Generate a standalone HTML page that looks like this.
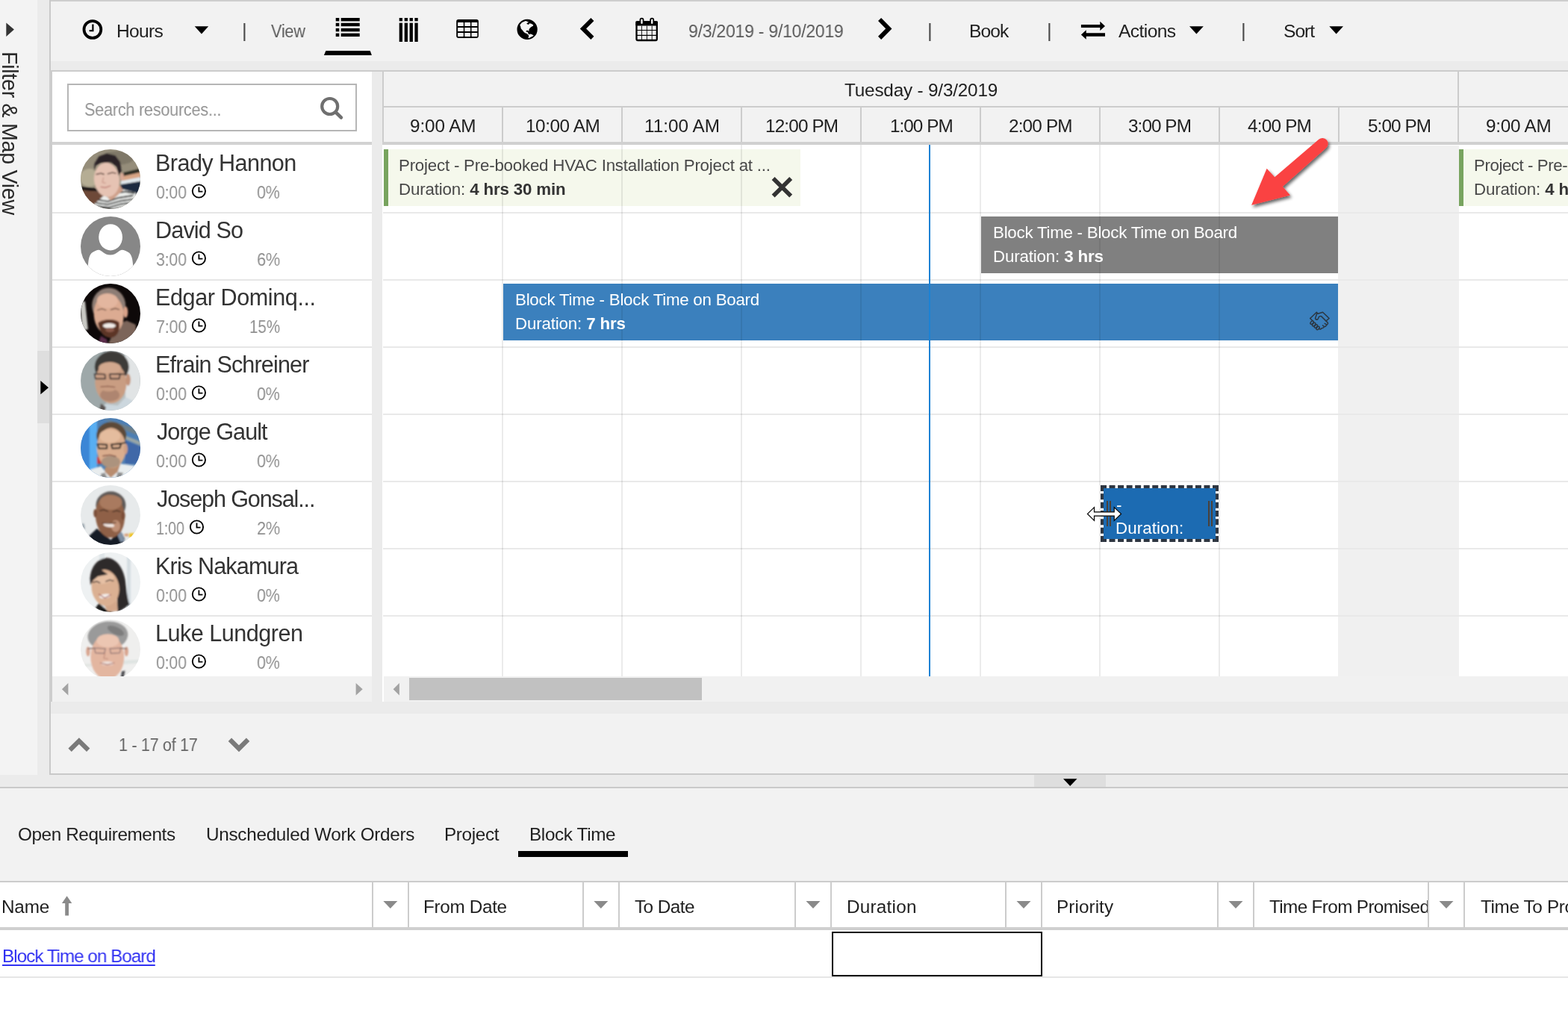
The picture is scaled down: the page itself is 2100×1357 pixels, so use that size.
<!DOCTYPE html>
<html lang="en"><head><meta charset="utf-8"><title>Schedule Board</title>
<style>
html,body{margin:0;padding:0;}
body{width:2100px;height:1357px;overflow:hidden;background:#fff;font-family:"Liberation Sans",Arial,sans-serif;}
#root{position:relative;width:2100px;height:1357px;overflow:hidden;background:#fff;}
#root div,#root svg,#root span.t{position:absolute;}
#root div{box-sizing:border-box;}
span.t{white-space:nowrap;will-change:transform;}
span.t b{font-weight:bold;}
</style></head><body><div id="root">
<!-- sidebar -->
<div style="left:0px;top:0px;width:50px;height:1038px;background:#f3f3f3;"></div>
<div style="left:50px;top:0px;width:16px;height:1038px;background:#ebebeb;"></div>
<div style="left:50px;top:470px;width:16px;height:97px;background:#dedede;"></div>
<!-- main panel -->
<div style="left:66px;top:0px;width:2034px;height:1038px;background:#f2f2f2;"></div>
<div style="left:66px;top:0px;width:2034px;height:2px;background:#cecece;"></div>
<div style="left:66px;top:0px;width:2px;height:1038px;background:#c9c9c9;"></div>
<div style="left:68px;top:82px;width:2032px;height:12px;background:#ebebeb;"></div>
<div style="left:66px;top:1036px;width:2034px;height:2px;background:#c9c9c9;"></div>
<div style="left:68px;top:940px;width:2032px;height:16px;background:#ebebeb;"></div>
<!-- board -->
<div style="left:66px;top:94px;width:2034px;height:2px;background:#cccccc;"></div>
<div style="left:66px;top:94px;width:4px;height:846px;background:#cdcdcd;"></div>
<div style="left:70px;top:96px;width:428px;height:810px;background:#ffffff;"></div>
<div style="left:90px;top:112px;width:388px;height:64px;background:#ffffff;border:2px solid #b6b6b6;"></div>
<div style="left:70px;top:190px;width:428px;height:4px;background:#d2d2d2;"></div>
<div style="left:70px;top:284px;width:428px;height:2px;background:#e6e6e6;"></div>
<div style="left:70px;top:374px;width:428px;height:2px;background:#e6e6e6;"></div>
<div style="left:70px;top:464px;width:428px;height:2px;background:#e6e6e6;"></div>
<div style="left:70px;top:554px;width:428px;height:2px;background:#e6e6e6;"></div>
<div style="left:70px;top:644px;width:428px;height:2px;background:#e6e6e6;"></div>
<div style="left:70px;top:734px;width:428px;height:2px;background:#e6e6e6;"></div>
<div style="left:70px;top:824px;width:428px;height:2px;background:#e6e6e6;"></div>
<div style="left:498px;top:96px;width:14px;height:844px;background:#ebebeb;"></div>
<div style="left:512px;top:96px;width:1588px;height:94px;background:#f2f2f2;"></div>
<div style="left:512px;top:96px;width:2px;height:94px;background:#cccccc;"></div>
<div style="left:512px;top:142px;width:1588px;height:2px;background:#cccccc;"></div>
<div style="left:672px;top:144px;width:2px;height:46px;background:#cccccc;"></div>
<div style="left:832px;top:144px;width:2px;height:46px;background:#cccccc;"></div>
<div style="left:992px;top:144px;width:2px;height:46px;background:#cccccc;"></div>
<div style="left:1152px;top:144px;width:2px;height:46px;background:#cccccc;"></div>
<div style="left:1312px;top:144px;width:2px;height:46px;background:#cccccc;"></div>
<div style="left:1472px;top:144px;width:2px;height:46px;background:#cccccc;"></div>
<div style="left:1632px;top:144px;width:2px;height:46px;background:#cccccc;"></div>
<div style="left:1792px;top:144px;width:2px;height:46px;background:#cccccc;"></div>
<div style="left:1952px;top:144px;width:2px;height:46px;background:#cccccc;"></div>
<div style="left:1952px;top:96px;width:2px;height:48px;background:#cccccc;"></div>
<div style="left:512px;top:190px;width:1588px;height:4px;background:#d0d0d0;"></div>
<div style="left:512px;top:194px;width:1588px;height:746px;background:#ffffff;"></div>
<div style="left:1792px;top:195px;width:162px;height:711px;background:#f0f0f0;"></div>
<div style="left:513px;top:284px;width:1587px;height:2px;background:#e9e9e9;"></div>
<div style="left:513px;top:374px;width:1587px;height:2px;background:#e9e9e9;"></div>
<div style="left:513px;top:464px;width:1587px;height:2px;background:#e9e9e9;"></div>
<div style="left:513px;top:554px;width:1587px;height:2px;background:#e9e9e9;"></div>
<div style="left:513px;top:644px;width:1587px;height:2px;background:#e9e9e9;"></div>
<div style="left:513px;top:734px;width:1587px;height:2px;background:#e9e9e9;"></div>
<div style="left:513px;top:824px;width:1587px;height:2px;background:#e9e9e9;"></div>
<div style="left:70px;top:906px;width:428px;height:34px;background:#f1f1f1;"></div>
<div style="left:514px;top:906px;width:1586px;height:34px;background:#f1f1f1;"></div>
<div style="left:548px;top:908px;width:392px;height:30px;background:#c1c1c1;"></div>
<!-- bookings -->
<div style="left:514px;top:200px;width:558px;height:76px;background:#f5f8ec;border-left:6px solid #78a45f;"></div>
<div style="left:1954px;top:200px;width:146px;height:76px;background:#f5f8ec;border-left:6px solid #78a45f;"></div>
<div style="left:1314px;top:290px;width:478px;height:76px;background:#808080;"></div>
<div style="left:674px;top:380px;width:1118px;height:76px;background:#3b80bd;"></div>
<div style="left:672px;top:194px;width:2px;height:712px;background:rgba(0,0,0,0.08);"></div>
<div style="left:832px;top:194px;width:2px;height:712px;background:rgba(0,0,0,0.08);"></div>
<div style="left:992px;top:194px;width:2px;height:712px;background:rgba(0,0,0,0.08);"></div>
<div style="left:1152px;top:194px;width:2px;height:712px;background:rgba(0,0,0,0.08);"></div>
<div style="left:1312px;top:194px;width:2px;height:712px;background:rgba(0,0,0,0.08);"></div>
<div style="left:1472px;top:194px;width:2px;height:712px;background:rgba(0,0,0,0.08);"></div>
<div style="left:1632px;top:194px;width:2px;height:712px;background:rgba(0,0,0,0.08);"></div>
<div style="left:1244px;top:194px;width:2px;height:712px;background:#1c82d4;"></div>
<div style="left:1474px;top:650px;width:158px;height:76px;background:#ffffff;"></div>
<div style="left:1474px;top:650px;width:158px;height:76px;background:#1c6bb2;border:4px dashed #2e3641;background-clip:padding-box;"></div>
<div style="left:1482px;top:671px;width:2px;height:34px;background:#4a413b;"></div>
<div style="left:1486px;top:671px;width:2px;height:34px;background:#4a413b;"></div>
<div style="left:1618px;top:671px;width:2px;height:34px;background:#4a413b;"></div>
<div style="left:1622px;top:671px;width:2px;height:34px;background:#4a413b;"></div>
<!-- bottom -->
<div style="left:0px;top:1038px;width:2100px;height:16px;background:#ebebeb;"></div>
<div style="left:1385px;top:1038px;width:96px;height:16px;background:#dedede;"></div>
<div style="left:0px;top:1054px;width:2100px;height:2px;background:#c9c9c9;"></div>
<div style="left:0px;top:1056px;width:2100px;height:124px;background:#f2f2f2;"></div>
<div style="left:694px;top:1140px;width:147px;height:8px;background:#000000;"></div>
<div style="left:0px;top:1180px;width:2100px;height:2px;background:#cccccc;"></div>
<div style="left:0px;top:1182px;width:2100px;height:60px;background:#ffffff;"></div>
<div style="left:498px;top:1182px;width:2px;height:60px;background:#cccccc;"></div>
<div style="left:546px;top:1182px;width:2px;height:60px;background:#cccccc;"></div>
<div style="left:780px;top:1182px;width:2px;height:60px;background:#cccccc;"></div>
<div style="left:828px;top:1182px;width:2px;height:60px;background:#cccccc;"></div>
<div style="left:1064px;top:1182px;width:2px;height:60px;background:#cccccc;"></div>
<div style="left:1112px;top:1182px;width:2px;height:60px;background:#cccccc;"></div>
<div style="left:1346px;top:1182px;width:2px;height:60px;background:#cccccc;"></div>
<div style="left:1394px;top:1182px;width:2px;height:60px;background:#cccccc;"></div>
<div style="left:1630px;top:1182px;width:2px;height:60px;background:#cccccc;"></div>
<div style="left:1678px;top:1182px;width:2px;height:60px;background:#cccccc;"></div>
<div style="left:1912px;top:1182px;width:2px;height:60px;background:#cccccc;"></div>
<div style="left:1960px;top:1182px;width:2px;height:60px;background:#cccccc;"></div>
<div style="left:0px;top:1242px;width:2100px;height:4px;background:#cfcfcf;"></div>
<div style="left:0px;top:1308px;width:2100px;height:2px;background:#e6e6e6;"></div>
<div style="left:1114px;top:1248px;width:282px;height:60px;background:transparent;border:2px solid #000;"></div>
<svg style="left:70px;top:194px" width="428" height="712" viewBox="70 194 428 712"><defs><filter id="avb" x="-10%" y="-10%" width="120%" height="120%"><feGaussianBlur stdDeviation="0.9"/></filter></defs><g transform="translate(108,200)"><clipPath id="avc0"><circle cx="40" cy="40" r="40"/></clipPath><g clip-path="url(#avc0)"><rect width="80" height="80" fill="#958d7a"/><g filter="url(#avb)"><ellipse cx="11.9" cy="38.1" rx="13" ry="12" fill="#b5ad94" /><ellipse cx="49.7" cy="11.6" rx="22" ry="9" fill="#7f7868" /><polygon points="-3.4,49.4 31.1,53.4 31.1,57.3 -3.4,54.7" fill="#1c1614" /><polygon points="-3.4,54.7 31.1,57.3 31.1,81.2 -3.4,81.2" fill="#6e4a38" /><polygon points="55.0,32.1 81.5,25.5 81.5,30.8 55.0,36.8" fill="#2a2a24" /><polygon points="55.0,36.4 81.5,30.5 81.5,37.4 55.0,42.7" fill="#d9a585" /><polygon points="53.7,42.4 81.5,37.1 81.5,42.7 53.7,47.4" fill="#e1e9ee" /><polygon points="53.7,47.1 81.5,42.4 81.5,62.6 53.7,62.6" fill="#1b2a40" /><polygon points="18.5,73.2 31.1,62.0 43.1,67.3 56.3,53.4 73.6,58.0 78.2,82.5 18.5,82.5" fill="#eef0ee" /><polyline points="24.5,67.9 36.4,69.9 49.7,65.3 69.6,62.0" fill="none" stroke="#161616" stroke-width="1.9" stroke-linecap="round" stroke-linejoin="round" /><polyline points="21.2,71.9 36.4,73.9 53.0,69.3 72.2,66.6" fill="none" stroke="#161616" stroke-width="1.9" stroke-linecap="round" stroke-linejoin="round" /><polyline points="19.8,75.9 37.7,77.9 55.0,73.2 73.6,71.3" fill="none" stroke="#161616" stroke-width="1.9" stroke-linecap="round" stroke-linejoin="round" /><polyline points="49.7,58.0 60.3,56.7 71.6,58.7" fill="none" stroke="#161616" stroke-width="1.9" stroke-linecap="round" stroke-linejoin="round" /><polyline points="27.1,79.2 43.1,80.5 59.6,77.2" fill="none" stroke="#161616" stroke-width="1.8" stroke-linecap="round" stroke-linejoin="round" /><polygon points="36.4,65.3 40.4,56.7 52.3,48.1 57.0,54.7 47.0,64.0 40.4,68.6" fill="#cfa08a" /><ellipse cx="55.3" cy="36.8" rx="2.6" ry="5.2" fill="#d8a894" /><ellipse cx="35.1" cy="40.8" rx="17" ry="23" fill="#e6c3b3" transform="rotate(-6 35.1 40.8)" /><polygon points="17.9,29.5 18.5,18.9 24.5,9.6 35.1,5.6 46.4,8.3 53.0,16.9 54.7,29.5 50.7,34.8 48.4,23.5 40.4,17.5 27.1,18.2 20.5,21.5" fill="#2b2427" /><polyline points="21.2,33.5 27.1,32.1 31.1,33.5" fill="none" stroke="#4a3028" stroke-width="1.4" stroke-linecap="round" stroke-linejoin="round" /><polyline points="36.4,32.8 42.4,31.1 47.0,32.1" fill="none" stroke="#4a3028" stroke-width="1.4" stroke-linecap="round" stroke-linejoin="round" /><polyline points="27.1,50.4 33.1,51.4 39.7,49.0" fill="none" stroke="#b8726a" stroke-width="1.3" stroke-linecap="round" stroke-linejoin="round" /><polyline points="30.5,38.1 29.1,44.1 33.1,45.4" fill="none" stroke="#c9978a" stroke-width="1.2" stroke-linecap="round" stroke-linejoin="round" /></g></g></g><g transform="translate(108,290)"><clipPath id="avc1"><circle cx="40" cy="40" r="40"/></clipPath><g clip-path="url(#avc1)"><rect width="80" height="80" fill="#878787"/><ellipse cx="40.1" cy="27.8" rx="15.9" ry="17.6" fill="#fff"/><path d="M9.9 66C10.5 56 12 50.5 16 48C19 46 22 44.7 24 44.7C28 44.7 31 51.4 39.7 51.4C48.5 51.4 51.5 44.7 55.5 44.7C58 44.7 61 46 64 48C68 50.5 69.6 56 70.2 66L82 90L-2 90Z" fill="#fff"/></g></g><g transform="translate(108,380)"><clipPath id="avc2"><circle cx="40" cy="40" r="40"/></clipPath><g clip-path="url(#avc2)"><rect width="80" height="80" fill="#0e0909"/><g filter="url(#avb)"><polygon points="-0.7,24.8 5.9,23.5 9.9,61.3 1.9,62.6" fill="#c9c9c4" /><polygon points="49.7,54.7 61.6,49.4 73.6,54.7 76.2,81.2 36.4,81.2" fill="#7b655a" /><polygon points="23.2,81.2 27.1,69.9 35.1,74.6 36.4,81.2" fill="#5c2d4c" /><ellipse cx="37.7" cy="29.5" rx="22.5" ry="24" fill="#8d7d74" /><ellipse cx="37.7" cy="41.4" rx="20" ry="27.5" fill="#dcab92" transform="rotate(-4 37.7 41.4)" /><ellipse cx="35.8" cy="22.9" rx="14" ry="10" fill="#e3b69f" /><ellipse cx="60.3" cy="38.1" rx="3" ry="7.5" fill="#d9a188" /><path d="M23.2 52.7C29.8 46.7 46.4 46.7 51.7 52.0C53.7 64.6 47.0 73.2 39.1 72.6C29.8 71.3 24.5 62.6 23.2 52.7Z" fill="#5c3527"/><ellipse cx="38.4" cy="56.3" rx="8.5" ry="3.3" fill="#f2ece8" /><ellipse cx="39.1" cy="62.0" rx="6" ry="3" fill="#8a5848" /><polyline points="22.5,35.5 28.5,33.5 33.8,35.5" fill="none" stroke="#5a4036" stroke-width="1.2" stroke-linecap="round" stroke-linejoin="round" /><polyline points="40.4,34.8 46.4,33.1 51.7,34.8" fill="none" stroke="#5a4036" stroke-width="1.2" stroke-linecap="round" stroke-linejoin="round" /></g></g></g><g transform="translate(108,470)"><clipPath id="avc3"><circle cx="40" cy="40" r="40"/></clipPath><g clip-path="url(#avc3)"><rect width="80" height="80" fill="#b9c0c1"/><g filter="url(#avb)"><rect x="0" y="0" width="34" height="80" fill="#9ea8a9"/><rect x="60" y="0" width="20" height="80" fill="#e1e4e5"/><polygon points="27.1,81.2 32.4,71.3 49.7,73.2 60.3,62.0 72.2,67.9 76.2,81.2" fill="#ccd7de" /><polygon points="24.5,81.2 27.1,70.6 33.8,75.2 32.4,81.2" fill="#5c5452" /><ellipse cx="41.7" cy="21.5" rx="23" ry="21" fill="#3c3a38" /><ellipse cx="40.4" cy="42.7" rx="21" ry="27.5" fill="#c99d82" transform="rotate(-3 40.4 42.7)" /><ellipse cx="39.1" cy="22.9" rx="15" ry="8" fill="#d2a88e" /><ellipse cx="63.6" cy="38.8" rx="3.2" ry="8" fill="#c39278" /><ellipse cx="39.1" cy="59.3" rx="13" ry="8.5" fill="#a47e68" opacity="0.75"/><ellipse cx="37.7" cy="52.0" rx="8" ry="2.5" fill="#c99d82" /><polyline points="18.5,30.8 32.4,31.5 33.1,37.4 19.8,37.4 18.5,30.8" fill="none" stroke="#3a3030" stroke-width="1.7" stroke-linecap="round" stroke-linejoin="round" /><polyline points="39.1,31.1 53.0,30.8 51.7,37.4 39.7,37.4 39.1,31.1" fill="none" stroke="#3a3030" stroke-width="1.7" stroke-linecap="round" stroke-linejoin="round" /><polyline points="53.0,31.1 61.6,31.5" fill="none" stroke="#3a3030" stroke-width="1.6" stroke-linecap="round" stroke-linejoin="round" /><polyline points="27.1,48.1 36.4,47.4 45.7,48.7" fill="none" stroke="#8a5a48" stroke-width="1.3" stroke-linecap="round" stroke-linejoin="round" /></g></g></g><g transform="translate(108,560)"><clipPath id="avc4"><circle cx="40" cy="40" r="40"/></clipPath><g clip-path="url(#avc4)"><rect width="80" height="80" fill="#4d7fb4"/><g filter="url(#avb)"><rect x="0" y="0" width="22" height="80" fill="#3b86d6"/><rect x="12" y="0" width="10" height="80" fill="#59aef2"/><polygon points="29.8,0.3 76.2,14.9 76.2,22.9 56.3,14.9" fill="#6c7f8a" /><polygon points="59.6,23.5 81.5,32.1 81.5,37.4 59.6,28.2" fill="#9aa6a6" /><polygon points="59.6,29.5 81.5,38.8 81.5,61.3 59.6,61.3" fill="#3f68a8" /><polygon points="21.8,52.0 27.1,52.0 28.5,61.3 21.8,61.3" fill="#c33a3a" /><polygon points="12.5,69.3 27.1,64.6 40.4,79.9 53.7,61.3 73.6,64.0 76.2,81.2 12.5,81.2" fill="#e9edee" /><polygon points="27.1,74.6 32.4,73.2 36.4,81.2 27.1,81.2" fill="#8d8d8d" /><polygon points="49.7,72.6 57.0,73.2 53.7,81.2 47.0,81.2" fill="#8d8d8d" /><polygon points="32.4,66.6 53.7,60.0 49.7,71.9 40.4,79.9 32.4,71.9" fill="#b88c6e" /><ellipse cx="41.1" cy="23.5" rx="20" ry="18" fill="#5c4838" /><ellipse cx="41.1" cy="40.1" rx="19.5" ry="27" fill="#daad8e" transform="rotate(-2 41.1 40.1)" /><ellipse cx="39.1" cy="24.2" rx="14" ry="9" fill="#e4bc9e" /><ellipse cx="60.3" cy="41.4" rx="2.6" ry="7" fill="#cf9f84" /><ellipse cx="40.4" cy="58.7" rx="12.5" ry="8" fill="#a08c7a" opacity="0.8"/><polyline points="22.5,34.8 35.1,35.8 35.1,40.8 24.5,40.8 22.5,34.8" fill="none" stroke="#2c2624" stroke-width="2.1" stroke-linecap="round" stroke-linejoin="round" /><polyline points="41.1,35.5 54.3,34.1 52.3,40.1 42.4,40.8 41.1,35.5" fill="none" stroke="#2c2624" stroke-width="2.1" stroke-linecap="round" stroke-linejoin="round" /><polyline points="54.3,34.1 60.3,32.8" fill="none" stroke="#2c2624" stroke-width="1.8" stroke-linecap="round" stroke-linejoin="round" /><polyline points="29.8,50.7 39.1,49.4 47.0,51.4" fill="none" stroke="#7a4a3c" stroke-width="1.4" stroke-linecap="round" stroke-linejoin="round" /></g></g></g><g transform="translate(108,650)"><clipPath id="avc5"><circle cx="40" cy="40" r="40"/></clipPath><g clip-path="url(#avc5)"><rect width="80" height="80" fill="#e7eaeb"/><g filter="url(#avb)"><polygon points="-0.1,51.4 4.6,51.4 5.9,58.7 1.9,58.7" fill="#9aa4ac" /><polygon points="64.9,64.6 72.2,64.0 69.6,69.9 64.9,69.9" fill="#f0c428" /><polygon points="58.3,65.3 63.6,64.6 64.3,68.6 59.0,68.6" fill="#d8a27c" /><polygon points="11.2,67.9 21.8,58.0 40.4,73.2 52.3,60.0 59.0,71.3 56.3,81.2 16.5,81.2" fill="#171b25" /><polygon points="51.0,60.0 56.3,65.3 59.0,74.6 53.7,76.6 49.7,67.9" fill="#7d8da2" /><ellipse cx="40.4" cy="26.8" rx="20" ry="18.5" fill="#5e5a58" /><ellipse cx="39.4" cy="41.4" rx="19.5" ry="29" fill="#8f6046" transform="rotate(-4 39.4 41.4)" /><ellipse cx="40.4" cy="22.9" rx="15" ry="10" fill="#a97a5e" /><ellipse cx="47.0" cy="54.7" rx="6" ry="8" fill="#bf9076" /><ellipse cx="57.0" cy="40.8" rx="2.6" ry="6" fill="#7a4e38" /><ellipse cx="19.5" cy="37.4" rx="2.2" ry="5.5" fill="#7a4e38" /><ellipse cx="37.7" cy="53.4" rx="7.5" ry="2.6" fill="#f1e6e0" transform="rotate(8 37.7 53.4)" /><polyline points="25.8,34.1 31.1,32.8 36.4,34.8" fill="none" stroke="#3c2a22" stroke-width="1.3" stroke-linecap="round" stroke-linejoin="round" /><polyline points="43.1,35.5 48.4,33.8 53.0,35.5" fill="none" stroke="#3c2a22" stroke-width="1.3" stroke-linecap="round" stroke-linejoin="round" /><polyline points="29.1,50.7 37.7,51.4 47.0,50.0" fill="none" stroke="#5c3a2c" stroke-width="1.3" stroke-linecap="round" stroke-linejoin="round" /></g></g></g><g transform="translate(108,740)"><clipPath id="avc6"><circle cx="40" cy="40" r="40"/></clipPath><g clip-path="url(#avc6)"><rect width="80" height="80" fill="#eef1f2"/><g filter="url(#avb)"><rect x="25" y="0" width="7" height="80" fill="#dfe5e8"/><rect x="62" y="0" width="5" height="80" fill="#d5dde2"/><path d="M12.5 34.8C13.9 16.9 24.5 7.6 35.1 7.3C48.4 8.3 56.3 20.2 59.6 36.1C61.6 51.4 62.9 64.6 65.6 69.9L49.7 80.5C48.4 67.9 49.7 54.7 48.4 41.4C36.4 29.5 21.8 32.1 12.5 34.8Z" fill="#2e2a2c"/><polygon points="19.8,74.6 24.5,67.9 36.4,78.6 47.0,80.5 29.8,81.2" fill="#1c1b1c" /><polygon points="29.8,67.9 48.4,61.3 49.7,78.6 36.4,79.2" fill="#d3a78a" /><ellipse cx="33.1" cy="47.4" rx="18.5" ry="24.5" fill="#dbb092" transform="rotate(-8 33.1 47.4)" /><ellipse cx="31.1" cy="34.8" rx="14" ry="7" fill="#e6c0a4" transform="rotate(-10 31.1 34.8)" /><ellipse cx="32.4" cy="58.7" rx="7.5" ry="3" fill="#f4eeea" transform="rotate(-8 32.4 58.7)" /><polyline points="24.5,56.0 32.4,61.3 40.4,56.7" fill="none" stroke="#a8605c" stroke-width="1.3" stroke-linecap="round" stroke-linejoin="round" /><polyline points="16.5,40.1 21.8,38.8 25.8,40.8" fill="none" stroke="#3a2a26" stroke-width="1.4" stroke-linecap="round" stroke-linejoin="round" /><polyline points="33.8,38.8 39.1,36.8 43.7,38.1" fill="none" stroke="#3a2a26" stroke-width="1.4" stroke-linecap="round" stroke-linejoin="round" /><polygon points="12.5,34.8 17.9,26.8 27.1,22.9 36.4,29.5 23.2,32.1 16.5,37.4 13.2,44.1" fill="#2e2a2c" /></g></g></g><g transform="translate(108,830)"><clipPath id="avc7"><circle cx="40" cy="40" r="40"/></clipPath><g clip-path="url(#avc7)"><rect width="80" height="80" fill="#efefee"/><g filter="url(#avb)"><polygon points="56.3,54.7 81.5,53.4 81.5,58.0 56.3,60.0" fill="#dfe4e2" /><polygon points="-3.4,60.0 16.5,58.7 16.5,62.6 -3.4,64.0" fill="#e3e6e3" /><polygon points="55.0,69.3 59.6,68.6 57.6,77.9 53.7,77.9" fill="#4c4c50" /><ellipse cx="36.4" cy="21.5" rx="27" ry="19" fill="#9a9a9a" transform="rotate(-6 36.4 21.5)" /><ellipse cx="47.0" cy="14.9" rx="12" ry="5" fill="#7d7d7d" transform="rotate(25 47.0 14.9)" /><ellipse cx="35.8" cy="50.0" rx="22.5" ry="30" fill="#e3b6a0" /><ellipse cx="36.4" cy="28.2" rx="15" ry="9" fill="#ecc6b2" /><ellipse cx="9.9" cy="42.7" rx="2.6" ry="6.5" fill="#d9a48e" /><ellipse cx="61.3" cy="42.7" rx="2.6" ry="6.5" fill="#d9a48e" /><polyline points="18.5,38.1 33.1,38.8 31.8,45.4 19.8,44.7 18.5,38.1" fill="none" stroke="#8a7070" stroke-width="1.2" stroke-linecap="round" stroke-linejoin="round" /><polyline points="39.1,38.8 53.7,38.1 52.3,44.7 40.4,45.4 39.1,38.8" fill="none" stroke="#8a7070" stroke-width="1.2" stroke-linecap="round" stroke-linejoin="round" /><polyline points="9.9,38.8 18.5,38.4" fill="none" stroke="#6e5a5a" stroke-width="1.3" stroke-linecap="round" stroke-linejoin="round" /><polyline points="53.7,38.4 61.6,38.8" fill="none" stroke="#6e5a5a" stroke-width="1.3" stroke-linecap="round" stroke-linejoin="round" /><ellipse cx="35.8" cy="58.7" rx="8.5" ry="2.8" fill="#efe2dc" /><polyline points="26.5,58.0 35.8,60.6 45.0,58.0" fill="none" stroke="#a86a60" stroke-width="1.2" stroke-linecap="round" stroke-linejoin="round" /><polyline points="32.4,45.4 31.1,52.0 36.4,52.7" fill="none" stroke="#c08a78" stroke-width="1.2" stroke-linecap="round" stroke-linejoin="round" /></g></g></g></svg>
<svg style="left:0;top:0;" width="2100" height="1357" viewBox="0 0 2100 1357"><polygon points="8.3,30.4 18.9,39.6 8.3,48.9" fill="#333"/><polygon points="54.3,510 65,519.2 54.3,528.3" fill="#000"/><circle cx="123.9" cy="39.5" r="11.4" fill="none" stroke="#000" stroke-width="3.8"/><path d="M124.4 32.6V41.2H119.6" fill="none" stroke="#000" stroke-width="2.2"/><polygon points="260.7,35.2 279.2,35.2 269.95,45.5" fill="#000"/><polygon points="1593,35.2 1611.8,35.2 1602.4,45.5" fill="#000"/><polygon points="1780.3,35.2 1799,35.2 1789.65,45.5" fill="#000"/><g fill="#000"><rect x="449.7" y="24" width="4.6" height="4.4"/><rect x="456.7" y="24" width="25" height="4.4"/><rect x="449.7" y="30.8" width="4.6" height="4.4"/><rect x="456.7" y="30.8" width="25" height="4.4"/><rect x="449.7" y="37.9" width="4.6" height="4.4"/><rect x="456.7" y="37.9" width="25" height="4.4"/><rect x="449.7" y="44.6" width="4.6" height="4.4"/><rect x="456.7" y="44.6" width="25" height="4.4"/></g><polygon points="436.4,68 495.7,68 497.9,74 433.9,74" fill="#000"/><g fill="#000"><rect x="534.7" y="24" width="4.3" height="4.3"/><rect x="534.7" y="30.7" width="4.3" height="25.3"/><rect x="541.7" y="24" width="4.3" height="4.3"/><rect x="541.7" y="30.7" width="4.3" height="25.3"/><rect x="548.6" y="24" width="4.3" height="4.3"/><rect x="548.6" y="30.7" width="4.3" height="25.3"/><rect x="555.4" y="24" width="4.3" height="4.3"/><rect x="555.4" y="30.7" width="4.3" height="25.3"/></g><rect x="611.2" y="25.9" width="29.7" height="25" rx="2.8" fill="#000"/><rect x="613.1" y="29.9" width="7.7" height="5.2" rx="0.6" fill="#f2f2f2"/><rect x="613.1" y="36.9" width="7.7" height="5.2" rx="0.6" fill="#f2f2f2"/><rect x="613.1" y="43.9" width="7.7" height="5.0" rx="0.6" fill="#f2f2f2"/><rect x="622.3" y="29.9" width="7.7" height="5.2" rx="0.6" fill="#f2f2f2"/><rect x="622.3" y="36.9" width="7.7" height="5.2" rx="0.6" fill="#f2f2f2"/><rect x="622.3" y="43.9" width="7.7" height="5.0" rx="0.6" fill="#f2f2f2"/><rect x="631.5" y="29.9" width="7.8" height="5.2" rx="0.6" fill="#f2f2f2"/><rect x="631.5" y="36.9" width="7.8" height="5.2" rx="0.6" fill="#f2f2f2"/><rect x="631.5" y="43.9" width="7.8" height="5.0" rx="0.6" fill="#f2f2f2"/><circle cx="706.1" cy="39.4" r="13.6" fill="#000"/><polygon points="696.2,33.6 698.9,30.3 702.7,28.6 704.5,28.0 705.6,28.8 708.0,29.4 705.6,31.2 705.4,32.1 708.0,33.0 709.2,31.2 711.5,31.8 714.2,33.3 713.9,34.7 711.5,35.9 709.5,37.7 708.3,40.1 708.6,41.8 707.4,41.2 706.2,40.6 704.8,41.2 704.5,42.4 706.8,43.0 708.0,46.0 709.2,46.0 710.7,45.4 712.7,46.3 714.8,47.7 711.5,49.5 708.6,51.0 707.4,50.7 708.3,48.0 707.7,47.1 705.6,45.1 703.3,44.2 701.5,42.7 699.7,40.6 697.7,38.3 697.1,35.3" fill="#f2f2f2"/><path d="M793.4 26L780.9 38.4L793.4 50.9" fill="none" stroke="#000" stroke-width="5.8"/><path d="M1178.1 26L1190.4 38.4L1178.1 50.9" fill="none" stroke="#000" stroke-width="5.8"/><rect x="852.5" y="29.4" width="27.3" height="24.6" rx="1.8" fill="none" stroke="#000" stroke-width="2.3"/><rect x="851.4" y="28.2" width="29.5" height="6.4" rx="1" fill="#000"/><rect x="856.6" y="23.7" width="5.8" height="9.6" rx="2.8" fill="#000"/><rect x="870.3" y="23.7" width="5.8" height="9.6" rx="2.8" fill="#000"/><rect x="858.3" y="25.6" width="2.4" height="6.4" rx="1.2" fill="#f2f2f2"/><rect x="872" y="25.6" width="2.4" height="6.4" rx="1.2" fill="#f2f2f2"/><path d="M859.4 34.5V54M866.4 34.5V54M873.2 34.5V54" stroke="#000" stroke-width="0.9" fill="none"/><path d="M852 40.5H880M852 47.4H880" stroke="#000" stroke-width="1.2" fill="none"/><path d="M1447.9 32.9H1473.3V28.8L1480 34.9L1473.3 41V37H1447.9Z M1480 44.2H1454.7V40.2L1447.9 46.5L1454.7 52.8V48.7H1480Z" fill="#000"/><circle cx="441.7" cy="142.5" r="10.5" fill="none" stroke="#6f6f6f" stroke-width="4.2"/><path d="M449.6 150.4L456.8 157.4" stroke="#6f6f6f" stroke-width="4.8" stroke-linecap="round"/><circle cx="266.4" cy="256" r="8.6" fill="none" stroke="#000" stroke-width="1.9"/><path d="M266.4 250.4V256.6H271.4" fill="none" stroke="#000" stroke-width="1.8"/><circle cx="266.4" cy="346" r="8.6" fill="none" stroke="#000" stroke-width="1.9"/><path d="M266.4 340.4V346.6H271.4" fill="none" stroke="#000" stroke-width="1.8"/><circle cx="266.4" cy="436" r="8.6" fill="none" stroke="#000" stroke-width="1.9"/><path d="M266.4 430.4V436.6H271.4" fill="none" stroke="#000" stroke-width="1.8"/><circle cx="266.4" cy="526" r="8.6" fill="none" stroke="#000" stroke-width="1.9"/><path d="M266.4 520.4V526.6H271.4" fill="none" stroke="#000" stroke-width="1.8"/><circle cx="266.4" cy="616" r="8.6" fill="none" stroke="#000" stroke-width="1.9"/><path d="M266.4 610.4V616.6H271.4" fill="none" stroke="#000" stroke-width="1.8"/><circle cx="263.5" cy="706" r="8.6" fill="none" stroke="#000" stroke-width="1.9"/><path d="M263.5 700.4V706.6H268.5" fill="none" stroke="#000" stroke-width="1.8"/><circle cx="266.4" cy="796" r="8.6" fill="none" stroke="#000" stroke-width="1.9"/><path d="M266.4 790.4V796.6H271.4" fill="none" stroke="#000" stroke-width="1.8"/><circle cx="266.4" cy="886" r="8.6" fill="none" stroke="#000" stroke-width="1.9"/><path d="M266.4 880.4V886.6H271.4" fill="none" stroke="#000" stroke-width="1.8"/><path d="M1035.6 239L1059.2 262.6M1059.2 239L1035.6 262.6" stroke="#333" stroke-width="5.6" fill="none"/><g fill="none" stroke="#2c3742" stroke-width="1.5" stroke-linejoin="round" stroke-linecap="round"><path d="M 1754.7 426.5 L 1763.3 418.3 L 1765.0 420.3 L 1771.5 418.3 L 1780.1 426.5 L 1776.0 429.8"/><path d="M 1763.9 419.4 L 1761.5 426.5 Q 1762.1 428.6 1764.5 428.0 Q 1765.6 427.4 1766.2 424.7 Q 1767.4 423.0 1769.5 423.6 L 1778.3 432.4 Q 1778.9 433.9 1777.1 435.1 M 1777.1 435.1 L 1774.2 433.3 M 1777.1 435.1 Q 1775.7 437.4 1773.6 437.7 L 1771.5 435.9 M 1773.6 437.7 Q 1771.5 440.1 1769.8 439.8 M 1769.8 439.8 Q 1768.6 441.8 1767.1 440.7 M 1754.7 426.5 L 1757.7 429.5"/><ellipse cx="1757.1" cy="432.1" rx="2.6" ry="1.6" transform="rotate(-45 1757.1 432.1)"/><ellipse cx="1759.7" cy="434.6" rx="2.6" ry="1.6" transform="rotate(-45 1759.7 434.6)"/><ellipse cx="1762.4" cy="437.0" rx="2.6" ry="1.6" transform="rotate(-45 1762.4 437.0)"/><ellipse cx="1765.0" cy="439.5" rx="2.6" ry="1.6" transform="rotate(-45 1765.0 439.5)"/></g><polygon points="91.4,915 91.4,931.4 82.9,923.2" fill="#a3a3a3"/><polygon points="476.6,915 476.6,931.4 485.7,923.2" fill="#a3a3a3"/><polygon points="534.9,915 534.9,931.4 526.6,923.2" fill="#a3a3a3"/><path d="M93.6 1004.7L105.9 992.5L118.2 1004.7" fill="none" stroke="#7a7a7a" stroke-width="6.2"/><path d="M307.9 990.8L320 1002.8L332.1 990.8" fill="none" stroke="#7a7a7a" stroke-width="6.2"/><polygon points="1424,1043.2 1442.5,1043.2 1433.2,1053" fill="#000"/><path d="M87.2 1226.6V1210H82.9L89.6 1200.2L96.3 1210H92V1226.6Z" fill="#8a8a8a"/><polygon points="513.3,1207 532.3,1207 522.8,1217" fill="#8a8a8a"/><polygon points="795.3,1207 814.3,1207 804.8,1217" fill="#8a8a8a"/><polygon points="1079.5,1207 1098.5,1207 1089,1217" fill="#8a8a8a"/><polygon points="1361.5,1207 1380.5,1207 1371,1217" fill="#8a8a8a"/><polygon points="1645.5,1207 1664.5,1207 1655,1217" fill="#8a8a8a"/><polygon points="1927.5,1207 1946.5,1207 1937,1217" fill="#8a8a8a"/></svg>
<span class="t " id="t0" style="left:155.88px;top:30px;font-size:24.6px;line-height:24.6px;color:#1f1f1f;letter-spacing:-0.680px;">Hours</span>
<span class="t " id="t1" style="left:324.17px;top:28px;font-size:26px;line-height:26px;color:#4a4a4a;">|</span>
<span class="t " id="t2" style="left:1242.17px;top:28px;font-size:26px;line-height:26px;color:#4a4a4a;">|</span>
<span class="t " id="t3" style="left:1402.17px;top:28px;font-size:26px;line-height:26px;color:#4a4a4a;">|</span>
<span class="t " id="t4" style="left:1662.17px;top:28px;font-size:26px;line-height:26px;color:#4a4a4a;">|</span>
<span class="t " id="t5" style="left:363.30px;top:30px;font-size:24.6px;line-height:24.6px;color:#5a5a5a;letter-spacing:-0.300px;transform:scaleX(0.8838);transform-origin:0 0;">View</span>
<span class="t " id="t6" style="left:921.72px;top:30px;font-size:24.6px;line-height:24.6px;color:#5a5a5a;letter-spacing:-0.300px;transform:scaleX(0.9391);transform-origin:0 0;">9/3/2019 - 9/10/2019</span>
<span class="t " id="t7" style="left:1297.88px;top:30px;font-size:24.6px;line-height:24.6px;color:#1f1f1f;letter-spacing:-0.942px;">Book</span>
<span class="t " id="t8" style="left:1497.60px;top:30px;font-size:24.6px;line-height:24.6px;color:#1f1f1f;letter-spacing:-0.581px;">Actions</span>
<span class="t " id="t9" style="left:1719.04px;top:30px;font-size:24.6px;line-height:24.6px;color:#1f1f1f;letter-spacing:-0.984px;transform:scaleX(0.9934);transform-origin:0 0;">Sort</span>
<span class="t " id="t10" style="left:113.12px;top:135px;font-size:24.6px;line-height:24.6px;color:#949494;letter-spacing:-0.300px;transform:scaleX(0.8826);transform-origin:0 0;">Search resources...</span>
<span class="t " id="t11" style="left:1131.12px;top:109px;font-size:24.3px;line-height:24.3px;color:#1f1f1f;letter-spacing:-0.188px;">Tuesday - 9/3/2019</span>
<span class="t " id="t12" style="left:549.16px;top:157px;font-size:24.3px;line-height:24.3px;color:#1f1f1f;letter-spacing:-0.113px;">9:00 AM</span>
<span class="t " id="t13" style="left:703.58px;top:157px;font-size:24.3px;line-height:24.3px;color:#1f1f1f;letter-spacing:-0.417px;">10:00 AM</span>
<span class="t " id="t14" style="left:863.28px;top:157px;font-size:24.3px;line-height:24.3px;color:#1f1f1f;letter-spacing:0.028px;">11:00 AM</span>
<span class="t " id="t15" style="left:1024.58px;top:157px;font-size:24.3px;line-height:24.3px;color:#1f1f1f;letter-spacing:-0.849px;">12:00 PM</span>
<span class="t " id="t16" style="left:1191.98px;top:157px;font-size:24.3px;line-height:24.3px;color:#1f1f1f;letter-spacing:-0.972px;">1:00 PM</span>
<span class="t " id="t17" style="left:1350.66px;top:157px;font-size:24.3px;line-height:24.3px;color:#1f1f1f;letter-spacing:-0.821px;">2:00 PM</span>
<span class="t " id="t18" style="left:1511.04px;top:157px;font-size:24.3px;line-height:24.3px;color:#1f1f1f;letter-spacing:-0.934px;">3:00 PM</span>
<span class="t " id="t19" style="left:1670.82px;top:157px;font-size:24.3px;line-height:24.3px;color:#1f1f1f;letter-spacing:-0.780px;">4:00 PM</span>
<span class="t " id="t20" style="left:1831.54px;top:157px;font-size:24.3px;line-height:24.3px;color:#1f1f1f;letter-spacing:-0.901px;">5:00 PM</span>
<span class="t " id="t21" style="left:1989.66px;top:157px;font-size:24.3px;line-height:24.3px;color:#1f1f1f;letter-spacing:-0.230px;">9:00 AM</span>
<span class="t " id="t22" style="left:207.71px;top:203px;font-size:30.6px;line-height:30.6px;color:#333333;letter-spacing:-0.571px;">Brady Hannon</span>
<span class="t " id="t23" style="left:209.13px;top:246px;font-size:24.3px;line-height:24.3px;color:#909090;letter-spacing:-0.200px;transform:scaleX(0.8780);transform-origin:0 0;">0:00</span>
<span class="t " id="t24" style="left:344.03px;top:246px;font-size:24.3px;line-height:24.3px;color:#909090;letter-spacing:-0.200px;transform:scaleX(0.8851);transform-origin:0 0;">0%</span>
<span class="t " id="t25" style="left:207.71px;top:293px;font-size:30.6px;line-height:30.6px;color:#333333;letter-spacing:-0.859px;">David So</span>
<span class="t " id="t26" style="left:209.13px;top:336px;font-size:24.3px;line-height:24.3px;color:#909090;letter-spacing:-0.200px;transform:scaleX(0.8780);transform-origin:0 0;">3:00</span>
<span class="t " id="t27" style="left:343.68px;top:336px;font-size:24.3px;line-height:24.3px;color:#909090;letter-spacing:-0.200px;transform:scaleX(0.8953);transform-origin:0 0;">6%</span>
<span class="t " id="t28" style="left:207.71px;top:383px;font-size:30.6px;line-height:30.6px;color:#333333;letter-spacing:-0.429px;">Edgar Dominq...</span>
<span class="t " id="t29" style="left:208.79px;top:426px;font-size:24.3px;line-height:24.3px;color:#909090;letter-spacing:-0.200px;transform:scaleX(0.8854);transform-origin:0 0;">7:00</span>
<span class="t " id="t30" style="left:333.81px;top:426px;font-size:24.3px;line-height:24.3px;color:#909090;letter-spacing:-0.200px;transform:scaleX(0.8522);transform-origin:0 0;">15%</span>
<span class="t " id="t31" style="left:207.71px;top:473px;font-size:30.6px;line-height:30.6px;color:#333333;letter-spacing:-0.861px;">Efrain Schreiner</span>
<span class="t " id="t32" style="left:209.13px;top:516px;font-size:24.3px;line-height:24.3px;color:#909090;letter-spacing:-0.200px;transform:scaleX(0.8780);transform-origin:0 0;">0:00</span>
<span class="t " id="t33" style="left:344.03px;top:516px;font-size:24.3px;line-height:24.3px;color:#909090;letter-spacing:-0.200px;transform:scaleX(0.8851);transform-origin:0 0;">0%</span>
<span class="t " id="t34" style="left:209.62px;top:563px;font-size:30.6px;line-height:30.6px;color:#333333;letter-spacing:-0.958px;">Jorge Gault</span>
<span class="t " id="t35" style="left:209.13px;top:606px;font-size:24.3px;line-height:24.3px;color:#909090;letter-spacing:-0.200px;transform:scaleX(0.8780);transform-origin:0 0;">0:00</span>
<span class="t " id="t36" style="left:344.03px;top:606px;font-size:24.3px;line-height:24.3px;color:#909090;letter-spacing:-0.200px;transform:scaleX(0.8851);transform-origin:0 0;">0%</span>
<span class="t " id="t37" style="left:209.62px;top:653px;font-size:30.6px;line-height:30.6px;color:#333333;letter-spacing:-1.143px;">Joseph Gonsal...</span>
<span class="t " id="t38" style="left:208.57px;top:696px;font-size:24.3px;line-height:24.3px;color:#909090;letter-spacing:-0.200px;transform:scaleX(0.8122);transform-origin:0 0;">1:00</span>
<span class="t " id="t39" style="left:343.68px;top:696px;font-size:24.3px;line-height:24.3px;color:#909090;letter-spacing:-0.200px;transform:scaleX(0.8953);transform-origin:0 0;">2%</span>
<span class="t " id="t40" style="left:207.71px;top:743px;font-size:30.6px;line-height:30.6px;color:#333333;letter-spacing:-0.851px;">Kris Nakamura</span>
<span class="t " id="t41" style="left:209.13px;top:786px;font-size:24.3px;line-height:24.3px;color:#909090;letter-spacing:-0.200px;transform:scaleX(0.8780);transform-origin:0 0;">0:00</span>
<span class="t " id="t42" style="left:344.03px;top:786px;font-size:24.3px;line-height:24.3px;color:#909090;letter-spacing:-0.200px;transform:scaleX(0.8851);transform-origin:0 0;">0%</span>
<span class="t " id="t43" style="left:207.71px;top:833px;font-size:30.6px;line-height:30.6px;color:#333333;letter-spacing:-0.511px;">Luke Lundgren</span>
<span class="t " id="t44" style="left:209.13px;top:876px;font-size:24.3px;line-height:24.3px;color:#909090;letter-spacing:-0.200px;transform:scaleX(0.8780);transform-origin:0 0;">0:00</span>
<span class="t " id="t45" style="left:344.03px;top:876px;font-size:24.3px;line-height:24.3px;color:#909090;letter-spacing:-0.200px;transform:scaleX(0.8851);transform-origin:0 0;">0%</span>
<span class="t " id="t46" style="left:534.06px;top:211px;font-size:22.3px;line-height:22.3px;color:#484848;letter-spacing:-0.211px;">Project - Pre-booked HVAC Installation Project at ...</span>
<span class="t " id="t47" style="left:534.06px;top:243px;font-size:22.3px;line-height:22.3px;color:#484848;letter-spacing:-0.151px;">Duration: <b style="color:#333">4 hrs 30 min</b></span>
<span class="t " id="t48" style="left:1974.06px;top:211px;font-size:22.3px;line-height:22.3px;color:#484848;letter-spacing:-0.436px;">Project - Pre-booked</span>
<span class="t " id="t49" style="left:1974.06px;top:243px;font-size:22.3px;line-height:22.3px;color:#484848;letter-spacing:-0.151px;">Duration: <b style="color:#333">4 hrs 30 min</b></span>
<span class="t " id="t50" style="left:1329.66px;top:301px;font-size:22.3px;line-height:22.3px;color:#ffffff;letter-spacing:-0.238px;">Block Time - Block Time on Board</span>
<span class="t " id="t51" style="left:1329.66px;top:333px;font-size:22.3px;line-height:22.3px;color:#ffffff;letter-spacing:-0.152px;">Duration: <b>3 hrs</b></span>
<span class="t " id="t52" style="left:689.66px;top:391px;font-size:22.3px;line-height:22.3px;color:#ffffff;letter-spacing:-0.238px;">Block Time - Block Time on Board</span>
<span class="t " id="t53" style="left:689.66px;top:423px;font-size:22.3px;line-height:22.3px;color:#ffffff;letter-spacing:-0.152px;">Duration: <b>7 hrs</b></span>
<span class="t " id="t54" style="left:1495.10px;top:666px;font-size:22.3px;line-height:22.3px;color:#ffffff;">-</span>
<span class="t " id="t55" style="left:1493.86px;top:697px;font-size:22.3px;line-height:22.3px;color:#ffffff;letter-spacing:0.084px;">Duration:</span>
<span class="t " id="t56" style="left:159.46px;top:986px;font-size:24.6px;line-height:24.6px;color:#666666;letter-spacing:-0.300px;transform:scaleX(0.8728);transform-origin:0 0;">1 - 17 of 17</span>
<span class="t " id="t57" style="left:23.96px;top:1106px;font-size:24.3px;line-height:24.3px;color:#1f1f1f;letter-spacing:-0.397px;">Open Requirements</span>
<span class="t " id="t58" style="left:275.58px;top:1106px;font-size:24.3px;line-height:24.3px;color:#1f1f1f;letter-spacing:-0.289px;">Unscheduled Work Orders</span>
<span class="t " id="t59" style="left:595.40px;top:1106px;font-size:24.3px;line-height:24.3px;color:#1f1f1f;letter-spacing:-0.352px;">Project</span>
<span class="t " id="t60" style="left:709.40px;top:1106px;font-size:24.3px;line-height:24.3px;color:#1f1f1f;letter-spacing:-0.361px;">Block Time</span>
<span class="t " id="t61" style="left:1.80px;top:1203px;font-size:24.3px;line-height:24.3px;color:#1f1f1f;letter-spacing:-0.210px;">Name</span>
<span class="t " id="t62" style="left:567.40px;top:1203px;font-size:24.3px;line-height:24.3px;color:#1f1f1f;letter-spacing:-0.335px;">From Date</span>
<span class="t " id="t63" style="left:850.42px;top:1203px;font-size:24.3px;line-height:24.3px;color:#1f1f1f;letter-spacing:-0.528px;">To Date</span>
<span class="t " id="t64" style="left:1133.90px;top:1203px;font-size:24.3px;line-height:24.3px;color:#1f1f1f;letter-spacing:0.231px;">Duration</span>
<span class="t " id="t65" style="left:1415.40px;top:1203px;font-size:24.3px;line-height:24.3px;color:#1f1f1f;letter-spacing:0.070px;">Priority</span>
<span class="t " id="t66" style="left:1700.42px;top:1203px;font-size:24.3px;line-height:24.3px;color:#1f1f1f;letter-spacing:-0.645px;clip-path:inset(0 3px 0 0);">Time From Promised</span>
<span class="t " id="t67" style="left:1982.92px;top:1203px;font-size:24.3px;line-height:24.3px;color:#1f1f1f;letter-spacing:-0.366px;">Time To Promised</span>
<span class="t " id="t68" style="left:3.01px;top:1269px;font-size:24.3px;line-height:24.3px;color:#3030f2;letter-spacing:-0.972px;transform:scaleX(0.9959);transform-origin:0 0;text-decoration:underline;text-decoration-thickness:2px;text-underline-offset:3px;">Block Time on Board</span>
<span class="t rot" id="t69" style="font-size:28.6px;line-height:28.6px;color:#2a2a2a;letter-spacing:-0.278px;left:26.5px;top:68.5px;transform-origin:0 0;transform:rotate(90deg);">Filter &amp; Map View</span>
<svg style="left:0;top:0;" width="2100" height="1357" viewBox="0 0 2100 1357"><defs><filter id="sh" x="-20%" y="-20%" width="150%" height="150%"><feGaussianBlur in="SourceAlpha" stdDeviation="1.9"/><feOffset dx="2.2" dy="2.6"/><feComponentTransfer><feFuncA type="linear" slope="0.62"/></feComponentTransfer><feMerge><feMergeNode/><feMergeNode in="SourceGraphic"/></feMerge></filter></defs><g filter="url(#sh)"><path d="M1676.1 274.8L1696.6 225.7L1707.2 237.2L1766.2 186.8A7.5 7.5 0 0 1 1776 198.2L1717.8 250L1728 261.5Z" fill="#fa4242"/></g><path d="M1456.5 688.4L1465.5 679.6V685.8H1492.2V679.6L1501.5 688.4L1492.2 697.4V691.2H1465.5V697.4Z" fill="#fff" stroke="#000" stroke-width="1.2" stroke-linejoin="miter"/></svg>
</div></body></html>
